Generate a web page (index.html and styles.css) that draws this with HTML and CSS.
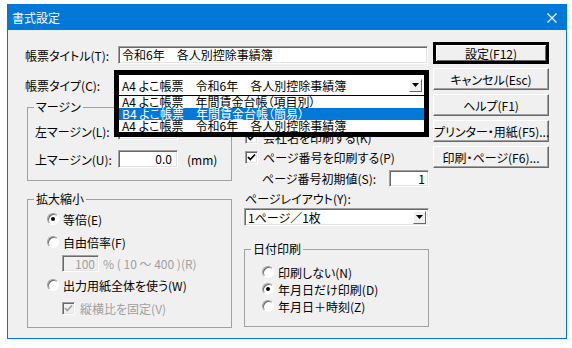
FILE: index.html
```html
<!DOCTYPE html>
<html lang="ja">
<head>
    <meta charset="UTF-8">
    <title>書式設定</title>
    <link rel="stylesheet" href="styles.css">
</head>
<body>
    <div class="window">
        <div class="titlebar">
            <span class="title">書式設定</span>
            <svg class="close" width="10" height="10" viewBox="0 0 10 10"><path d="M0.5 0.5L9.5 9.5M9.5 0.5L0.5 9.5" stroke="#fff" stroke-width="1.1"/></svg>
        </div>
        <div class="client">
            <div class="main">
                <div class="row">
                    <label class="lbl">帳票タイトル(T):</label>
                    <div class="field sunken title-field">令和6年　各人別控除事績簿</div>
                </div>
                <div class="row row-type">
                    <label class="lbl">帳票タイプ(C):</label>
                    <div class="combo-slot">
                        <!-- opened dropdown, drawn over the form -->
                        <div class="combo-pop">
                            <div class="combo-field">
                                <span>A4 よこ帳票　令和6年　各人別控除事績簿</span>
                                <span class="arrow"><svg width="7" height="4" viewBox="0 0 7 4"><path d="M0 0H7L3.5 4Z" fill="#000"/></svg></span>
                            </div>
                            <div class="combo-list">
                                <div class="opt">A4 よこ帳票　年間賃金台帳（項目別）</div>
                                <div class="opt sel">B4 よこ帳票　年間賃金台帳（簡易）</div>
                                <div class="opt">A4 よこ帳票　令和6年　各人別控除事績簿</div>
                            </div>
                        </div>
                    </div>
                </div>
                <div class="cols">
                    <div class="col-left">
                        <fieldset class="group">
                            <legend>マージン</legend>
                            <div class="margin-body">
                                <div class="mrow">
                                    <label class="mlbl">左マージン(L):</label>
                                    <div class="sunken num">0.0</div>
                                </div>
                                <div class="mrow">
                                    <label class="mlbl">上マージン(U):</label>
                                    <div class="sunken num">0.0</div>
                                    <span class="unit">(mm)</span>
                                </div>
                            </div>
                        </fieldset>
                        <fieldset class="group">
                            <legend>拡大縮小</legend>
                            <div class="scale-body">
                                <div class="opt-row"><span class="rb on"></span>等倍(E)</div>
                                <div class="opt-row gap-l"><span class="rb"></span>自由倍率(F)</div>
                                <div class="ratio-row">
                                    <div class="sunken num ratio">100</div>
                                    <span class="dim">% ( 10 ～ 400 )(R)</span>
                                </div>
                                <div class="opt-row gap-s"><span class="rb"></span>出力用紙全体を使う(W)</div>
                                <div class="opt-row gap-l indent">
                                    <span class="cb off"><svg width="11" height="11" viewBox="0 0 11 11"><path d="M2 5L4.3 7.5L9 2.5" stroke="#a0a0a0" stroke-width="1.8" fill="none"/></svg></span>
                                    <span class="dim">縦横比を固定(V)</span>
                                </div>
                            </div>
                        </fieldset>
                    </div>
                    <div class="col-right">
                        <div class="opt-row"><span class="cb"><svg width="11" height="11" viewBox="0 0 11 11"><path d="M2 5L4.3 7.5L9 2.5" stroke="#000" stroke-width="1.8" fill="none"/></svg></span>会社名を印刷する(K)</div>
                        <div class="opt-row gap-s"><span class="cb"><svg width="11" height="11" viewBox="0 0 11 11"><path d="M2 5L4.3 7.5L9 2.5" stroke="#000" stroke-width="1.8" fill="none"/></svg></span>ページ番号を印刷する(P)</div>
                        <div class="start-row">
                            <label>ページ番号初期値(S):</label>
                            <div class="sunken num start">1</div>
                        </div>
                        <div class="layout-lbl">ページレイアウト(Y):</div>
                        <div class="sunken select">
                            <span>1ページ／1枚</span>
                            <span class="arrow"><svg width="7" height="4" viewBox="0 0 7 4"><path d="M0 0H7L3.5 4Z" fill="#000"/></svg></span>
                        </div>
                        <fieldset class="group date-group">
                            <legend>日付印刷</legend>
                            <div class="date-body">
                                <div class="opt-row"><span class="rb"></span>印刷しない(N)</div>
                                <div class="opt-row"><span class="rb on"></span>年月日だけ印刷(D)</div>
                                <div class="opt-row"><span class="rb"></span>年月日＋時刻(Z)</div>
                            </div>
                        </fieldset>
                    </div>
                </div>
            </div>
            <div class="buttons">
                <button class="btn btn-default">設定(F12)</button>
                <button class="btn">キャンセル(Esc)</button>
                <button class="btn">ヘルプ(F1)</button>
                <button class="btn">プリンター・用紙(F5)...</button>
                <button class="btn">印刷・ページ(F6)...</button>
            </div>
        </div>
    </div>
</body>
</html>
```

FILE: styles.css
```css
* {
    box-sizing: border-box;
}
body {
    margin: 0;
    padding: 4px 0 0 7px;
    background: #fff;
    font-family: "Noto Sans CJK JP", "Noto Sans", sans-serif;
    font-size: 12px;
    font-feature-settings: "palt";
    color: #000;
}
.window {
    width: 560px;
    height: 335px;
    border: 1px solid #0078d7;
    background: #f0f0f0;
    display: flex;
    flex-direction: column;
}
.titlebar {
    height: 25px;
    background: #0078d7;
    color: #fff;
    display: flex;
    align-items: center;
    justify-content: space-between;
    padding: 0 9px 0 4px;
}
.client {
    flex: 1;
    display: grid;
    grid-template-columns: 404px 116px;
    column-gap: 4px;
    align-items: start;
    padding: 12px 0 0 17px;
}
.main {
    padding-top: 4px;
}
.row {
    display: flex;
    align-items: center;
    height: 18px;
}
.row-type {
    margin-top: 11px;
    height: 20px;
}
.lbl {
    width: 93px;
    white-space: nowrap;
}
.sunken {
    background: #fff;
    border: 1px solid;
    border-color: #a0a0a0 #fff #fff #a0a0a0;
    box-shadow: inset 1px 1px 0 #696969, inset -1px -1px 0 #e3e3e3;
}
.field {
    width: 310px;
    height: 18px;
    line-height: 16px;
    padding-left: 3px;
}

/* opened combo box */
.combo-slot {
    position: relative;
    width: 310px;
    height: 20px;
}
.combo-pop {
    position: absolute;
    left: -4px;
    top: -5px;
    width: 315px;
    border: 5px solid #000;
    background: #fff;
    z-index: 2;
}
.combo-field {
    height: 20px;
    display: flex;
    align-items: center;
    justify-content: space-between;
    padding: 0 2px 0 3px;
    white-space: nowrap;
}
.arrow {
    width: 13px;
    height: 13px;
    display: flex;
    align-items: center;
    justify-content: center;
    background: #f0f0f0;
    border: 1px solid;
    border-color: #fff #696969 #696969 #fff;
}
.combo-list {
    border-top: 1px solid #000;
}
.opt {
    height: 12px;
    line-height: 12px;
    padding-left: 3px;
    white-space: nowrap;
}
.opt.sel {
    background: #0078d7;
    color: #fff;
}

.cols {
    display: grid;
    grid-template-columns: 205px 185px;
    column-gap: 12px;
    margin: 6px 0 0 2px;
}
.col-left {
    display: flex;
    flex-direction: column;
    gap: 12px;
}
.group {
    margin: 0;
    padding: 0;
    min-width: 0;
    border: 1px solid #a0a0a0;
}
.group legend {
    margin-left: 6px;
    padding: 0 2px;
    line-height: 12px;
}
.margin-body {
    padding: 9px 0 12px 7px;
    display: flex;
    flex-direction: column;
    gap: 10px;
}
.mrow {
    display: flex;
    align-items: center;
    height: 18px;
}
.mlbl {
    width: 83px;
    white-space: nowrap;
}
.num {
    width: 60px;
    height: 18px;
    line-height: 16px;
    text-align: right;
    padding-right: 5px;
}
.unit {
    margin-left: 9px;
}
.scale-body {
    padding: 7px 0 12px 19px;
}
.opt-row {
    display: flex;
    align-items: center;
    gap: 4px;
    height: 14px;
    white-space: nowrap;
}
.gap-l {
    margin-top: 9px;
}
.gap-s {
    margin-top: 6px;
}
.indent {
    padding-left: 15px;
}
.ratio-row {
    display: flex;
    align-items: center;
    margin-top: 6px;
    padding-left: 15px;
    height: 17px;
}
.ratio {
    width: 37px;
    height: 17px;
    background: #f0f0f0;
    color: #a0a0a0;
    padding-right: 3px;
}
.dim {
    color: #a0a0a0;
    margin-left: 4px;
}
.indent .dim {
    margin-left: 0;
}
.rb {
    width: 12px;
    height: 12px;
    flex: none;
    border-radius: 50%;
    background: #fff;
    border: 1px solid;
    border-color: #a0a0a0 #fff #fff #a0a0a0;
    box-shadow: inset 1px 1px 0 #696969;
    display: flex;
    align-items: center;
    justify-content: center;
}
.rb.on::after {
    content: "";
    width: 4px;
    height: 4px;
    border-radius: 50%;
    background: #000;
}
.cb {
    width: 13px;
    height: 13px;
    flex: none;
    margin-right: 1px;
    background: #fff;
    border: 1px solid;
    border-color: #a0a0a0 #fff #fff #a0a0a0;
    box-shadow: inset 1px 1px 0 #696969, inset -1px -1px 0 #e3e3e3;
    display: flex;
}
.cb.off {
    background: #f0f0f0;
}

.col-right {
    padding-top: 29px;
}
.col-right > .opt-row {
    padding-left: 1px;
}
.start-row {
    display: flex;
    align-items: center;
    justify-content: space-between;
    margin-top: 6px;
    padding-left: 18px;
    height: 17px;
}
.start {
    width: 40px;
    height: 17px;
    padding-right: 3px;
}
.layout-lbl {
    margin-top: 6px;
    line-height: 12px;
    padding-left: 1px;
}
.select {
    margin-top: 3px;
    height: 18px;
    display: flex;
    align-items: center;
    justify-content: space-between;
    padding: 0 2px 0 3px;
}
.date-group {
    margin-top: 17px;
}
.date-body {
    padding: 10px 0 13px 17px;
    display: flex;
    flex-direction: column;
    gap: 3px;
}

.buttons {
    display: flex;
    flex-direction: column;
    gap: 4px;
}
.btn {
    height: 22px;
    padding: 0;
    font: inherit;
    font-feature-settings: "palt";
    color: #000;
    background: #f0f0f0;
    border: 1px solid;
    border-color: #fff #696969 #696969 #fff;
    box-shadow: inset -1px -1px 0 #a0a0a0;
    white-space: nowrap;
}
.btn-default {
    border: 3px solid #000;
    box-shadow: inset 1px 1px 0 #fff, inset -1px -1px 0 #696969;
}
```
